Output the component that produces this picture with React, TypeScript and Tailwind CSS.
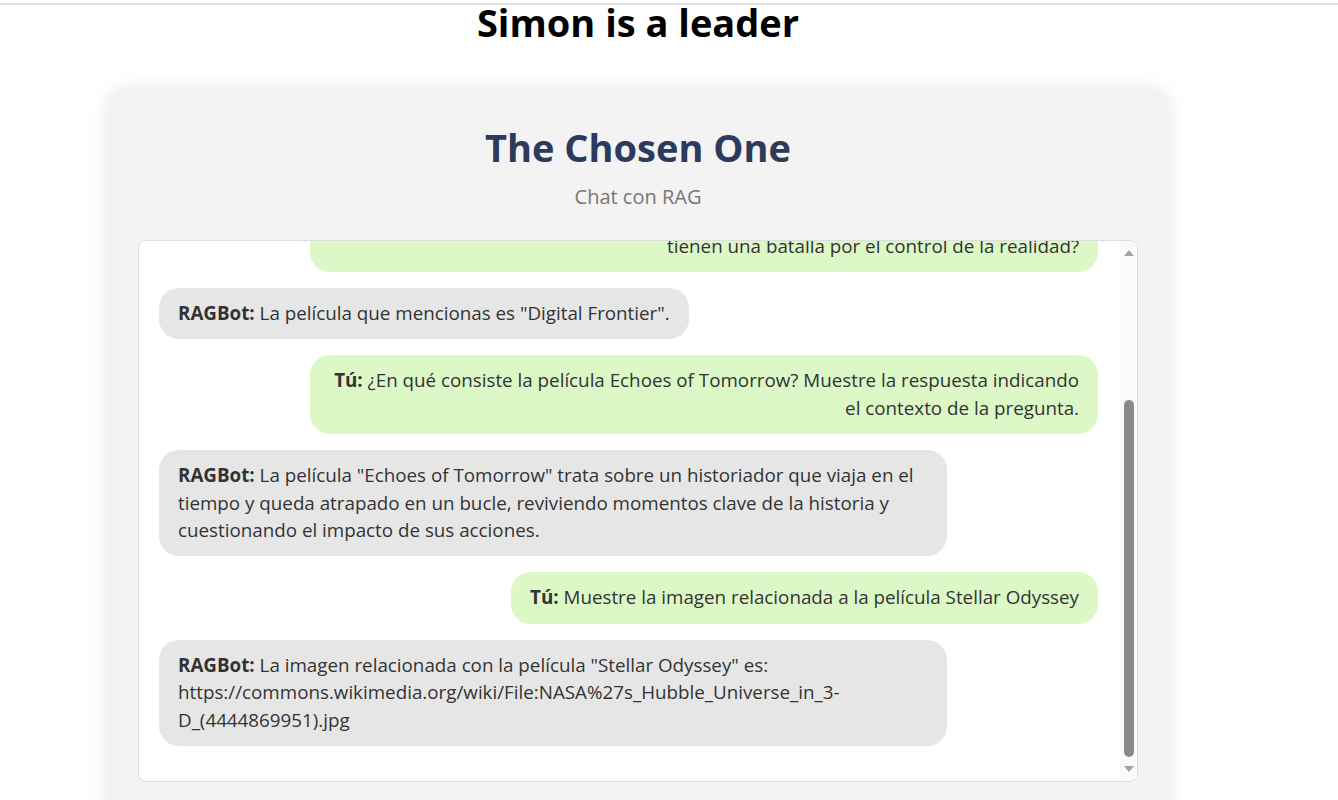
import React from 'react';

type Msg = { from: 'user' | 'bot'; text: string };

const messages: Msg[] = [
    { from: 'user', text: 'Hola, ¿qué películas conoces?' },
    { from: 'bot', text: 'Conozco varias películas de ciencia ficción, como "Digital Frontier", "Echoes of Tomorrow" y "Stellar Odyssey". ¿Sobre cuál quieres saber?' },
    { from: 'user', text: '¿Cuál es la película en la que un joven programador y una inteligencia artificial tienen una batalla por el control de la realidad?' },
    { from: 'bot', text: 'La película que mencionas es "Digital Frontier".' },
    { from: 'user', text: '¿En qué consiste la película Echoes of Tomorrow? Muestre la respuesta indicando el contexto de la pregunta.' },
    { from: 'bot', text: 'La película "Echoes of Tomorrow" trata sobre un historiador que viaja en el tiempo y queda atrapado en un bucle, reviviendo momentos clave de la historia y cuestionando el impacto de sus acciones.' },
    { from: 'user', text: 'Muestre la imagen relacionada a la película Stellar Odyssey' },
    { from: 'bot', text: 'La imagen relacionada con la película "Stellar Odyssey" es: https://commons.wikimedia.org/wiki/File:NASA%27s_Hubble_Universe_in_3-D_(4444869951).jpg' },
];

const App = () => {
    return (
        <div className="min-h-screen bg-white" style={{ fontFamily: '"Open Sans", "Noto Sans", sans-serif' }}>
            <div className="mt-[3px] h-[2px] bg-[#e2e2e2]" />
            <div className="w-[1276px]">
                <h1 className="-mt-[2px] text-center text-[38px] font-bold leading-[38px] text-black">Simon is a leader</h1>

                <div className="mx-auto mt-[49px] w-[1060px] h-[760px] rounded-[15px] bg-[#f3f3f3] p-[30px] shadow-[0_0_20px_rgba(0,0,0,0.1)]">
                    <h2 className="text-center text-[38px] font-bold leading-[48px] text-[#2c3a5c] mt-[3px]">The Chosen One</h2>
                    <p className="text-center text-[20px] leading-[28px] text-[#777777] mt-[12px]">Chat con RAG</p>

                    <div className="mt-[29px] flex h-[542px] w-[1000px] rounded-[8px] border border-[#dddddd] bg-white overflow-hidden">
                        <div className="flex flex-1 flex-col justify-end gap-[16px] overflow-hidden pl-[20px] pr-[22px] pt-[20px] pb-[35px] text-[18.8px] leading-[27.4px] text-[#333333]">
                            {messages.map((m, i) => (
                                <div key={i} className={`flex shrink-0 ${m.from === 'user' ? 'justify-end' : 'justify-start'}`}>
                                    <div className={`max-w-[788px] rounded-[20px] px-[19px] py-[12px] break-words ${m.from === 'user'
                                        ? 'bg-[#dcf8c6] text-right'
                                        : 'bg-[#e6e6e6] text-left'}`}
                                    >
                                        <b>{m.from === 'user' ? 'Tú:' : 'RAGBot:'}</b> {m.text}
                                    </div>
                                </div>
                            ))}
                        </div>

                        <div className="flex w-[17px] flex-col items-center bg-[#fafafa] py-[9px]">
                            <svg width="10" height="6" viewBox="0 0 10 6">
                                <path d="M0 6 L5 0 L10 6 Z" fill="#a3a3a3" />
                            </svg>
                            <div className="flex-1" />
                            <div className="h-[357px] w-[10px] rounded-full bg-[#8a8a8a]" />
                            <div className="h-[9px]" />
                            <svg width="10" height="6" viewBox="0 0 10 6">
                                <path d="M0 0 L10 0 L5 6 Z" fill="#a3a3a3" />
                            </svg>
                        </div>
                    </div>
                </div>
            </div>
        </div>
    );
};

export default App;
